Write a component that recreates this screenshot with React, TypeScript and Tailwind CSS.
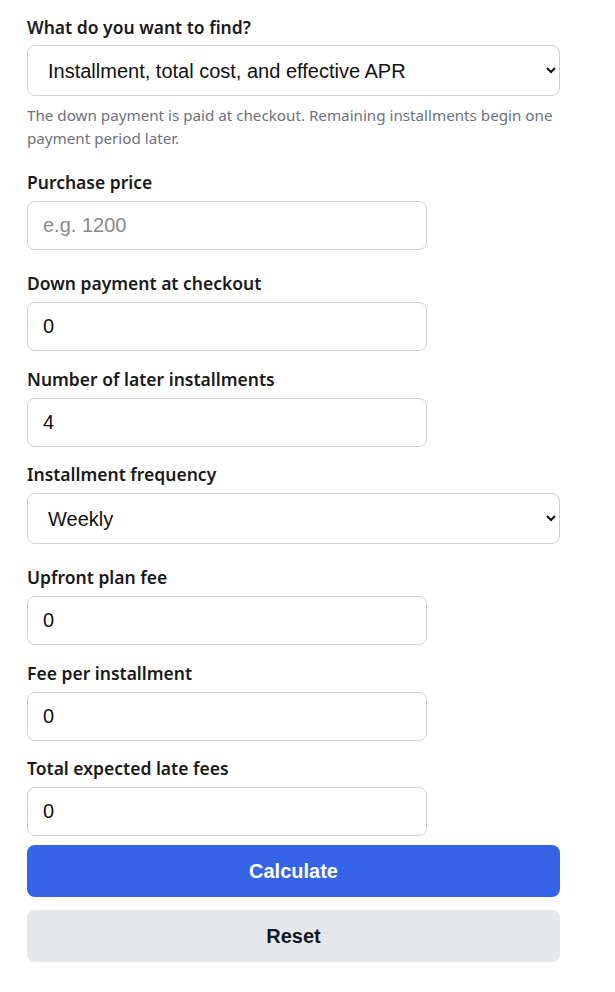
import React from "react";

const labelCls = "block text-[17.5px] font-semibold leading-6 text-[#1a1a1a] mb-[7px]";
const inputCls =
  "block h-[49px] w-[400px] rounded-lg border border-[#ccd1da] bg-white px-[15px] text-[20px] text-[#111] placeholder:text-[#8a8a8a] outline-none";
const selectCls =
  "block h-[51px] w-full rounded-lg border border-[#ccd1da] bg-white pl-[16px] pr-3 text-[20px] text-[#111] outline-none";
const arial = { fontFamily: '"Liberation Sans", Arial, sans-serif' };

function Field({ label, value, placeholder, mb = "mb-[15.5px]" }: { label: string; value?: string; placeholder?: string; mb?: string }) {
  return (
    <div className={mb}>
      <label className={labelCls}>{label}</label>
      <input type="text" defaultValue={value} placeholder={placeholder} className={inputCls} style={arial} />
    </div>
  );
}

export default function App() {
  return (
    <div className="min-h-screen bg-white" style={{ fontFamily: '"Noto Sans", "Open Sans", sans-serif' }}>
      <form className="px-[27px] pt-[15px] w-[587px]" onSubmit={(e) => e.preventDefault()}>
        <div className="mb-5">
          <label className={labelCls + " !mb-[6px]"}>What do you want to find?</label>
          <select className={selectCls} style={arial} defaultValue="a">
            <option value="a">Installment, total cost, and effective APR</option>
          </select>
          <p className="mt-2 text-[15.2px] leading-[23px] text-[#6b7280]">
            The down payment is paid at checkout. Remaining installments begin one payment period later.
          </p>
        </div>

        <Field label="Purchase price" placeholder="e.g. 1200" mb="mb-[21px]" />
        <Field label="Down payment at checkout" value="0" />
        <Field label="Number of later installments" value="4" />

        <div className="mb-[21px]">
          <label className={labelCls}>Installment frequency</label>
          <select className={selectCls} style={arial} defaultValue="w">
            <option value="w">Weekly</option>
          </select>
        </div>

        <Field label="Upfront plan fee" value="0" />
        <Field label="Fee per installment" value="0" />
        <Field label="Total expected late fees" value="0" mb="mb-[9px]" />

        <div className="flex flex-col gap-[13px]" style={arial}>
          <button type="submit" className="h-[52px] w-full rounded-lg bg-[#3565e6] text-[20px] font-bold text-white">
            Calculate
          </button>
          <button type="button" className="h-[52px] w-full rounded-lg bg-[#e5e7eb] text-[20px] font-bold text-[#111827]">
            Reset
          </button>
        </div>
      </form>
    </div>
  );
}
